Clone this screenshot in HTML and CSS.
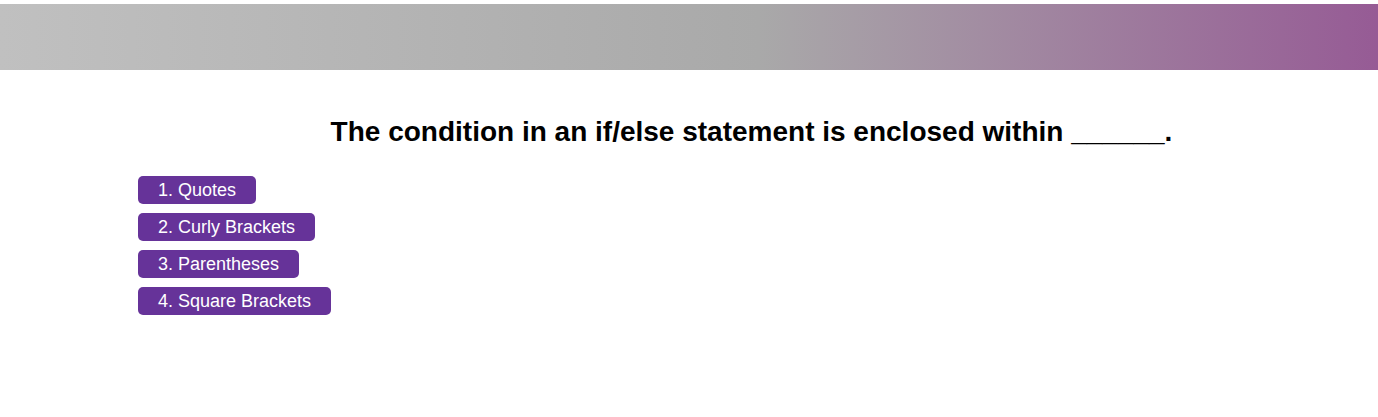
FILE: index.html
```html
<!DOCTYPE html>
<html lang="en">
<head>
<meta charset="utf-8">
<title>Quiz</title>
<link rel="stylesheet" href="styles.css">
</head>
<body>
<header class="banner"></header>
<main class="quiz">
  <h1 class="question">The condition in an if/else statement is enclosed within ______.</h1>
  <ul class="choices">
    <li><button class="choice">1. Quotes</button></li>
    <li><button class="choice">2. Curly Brackets</button></li>
    <li><button class="choice">3. Parentheses</button></li>
    <li><button class="choice">4. Square Brackets</button></li>
  </ul>
</main>
</body>
</html>
```
FILE: styles.css
```css
html, body {
  margin: 0;
  padding: 0;
  background: #ffffff;
  font-family: "Liberation Sans", Arial, sans-serif;
}

.banner {
  margin-top: 4px;
  height: 66px;
  background: linear-gradient(to right, #c0c0c0 0%, #a9a9a9 55%, #965b95 100%);
}

.quiz {
  padding: 46px 13px 0 138px;
}

.question {
  margin: 0;
  font-size: 28px;
  line-height: 32px;
  font-weight: bold;
  text-align: center;
  color: #000;
}

.choices {
  list-style: none;
  margin: 28px 0 0 0;
  padding: 0;
  display: flex;
  flex-direction: column;
  align-items: flex-start;
  gap: 9px;
}

.choices li {
  margin: 0;
  padding: 0;
}

.choice {
  display: block;
  border: 0;
  margin: 0;
  padding: 4px 20px;
  font-family: "Liberation Sans", Arial, sans-serif;
  font-size: 18px;
  line-height: 20px;
  color: #ffffff;
  background: #663399;
  border-radius: 5px;
  cursor: pointer;
}
```
